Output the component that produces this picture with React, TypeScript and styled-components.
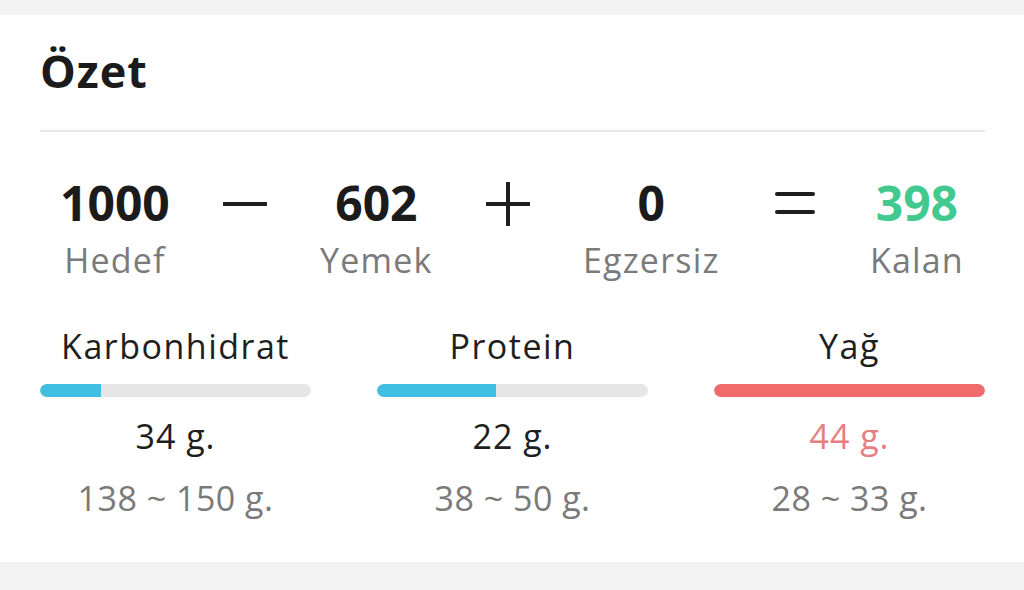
import styled, { createGlobalStyle } from 'styled-components';

const GlobalStyle = createGlobalStyle`
  html, body {
    margin: 0;
    padding: 0;
    background: #f3f3f3;
    font-family: 'Open Sans', 'DejaVu Sans', sans-serif;
  }
`;

const SUMMARY = {
  goal: 1000,
  food: 602,
  exercise: 0,
  remaining: 398,
};

const MACROS = [
  { name: 'Karbonhidrat', amount: 34, min: 138, max: 150, over: false },
  { name: 'Protein', amount: 22, min: 38, max: 50, over: false },
  { name: 'Yağ', amount: 44, min: 28, max: 33, over: true },
];

type OpKind = 'minus' | 'plus' | 'equals';

const OpIcon = ({ kind }: { kind: OpKind }) => (
  <Operator viewBox="0 0 44 44" width={44} height={44}>
    {kind === 'minus' && <line x1="1" y1="22" x2="43" y2="22" />}
    {kind === 'plus' && (
      <>
        <line x1="1" y1="22" x2="43" y2="22" />
        <line x1="22" y1="1" x2="22" y2="43" />
      </>
    )}
    {kind === 'equals' && (
      <>
        <line x1="4" y1="12" x2="40" y2="12" />
        <line x1="4" y1="30" x2="40" y2="30" />
      </>
    )}
  </Operator>
);

const App = () => {
  return (
    <Page>
      <GlobalStyle />
      <Card>
        <Title>Özet</Title>
        <Divider />
        <Equation>
          <Term>
            <Value>{SUMMARY.goal}</Value>
            <TermLabel>Hedef</TermLabel>
          </Term>
          <OpIcon kind="minus" />
          <Term>
            <Value>{SUMMARY.food}</Value>
            <TermLabel>Yemek</TermLabel>
          </Term>
          <OpIcon kind="plus" />
          <Term>
            <Value>{SUMMARY.exercise}</Value>
            <TermLabel>Egzersiz</TermLabel>
          </Term>
          <OpIcon kind="equals" />
          <Term>
            <Value $accent>{SUMMARY.remaining}</Value>
            <TermLabel>Kalan</TermLabel>
          </Term>
        </Equation>
        <MacroGrid>
          {MACROS.map(m => {
            const pct = Math.min(100, (m.amount / m.max) * 100);
            return (
              <Macro key={m.name}>
                <MacroName>{m.name}</MacroName>
                <Track>
                  <Fill $over={m.over} style={{ width: m.over ? '100%' : `${pct}%` }} />
                </Track>
                <Amount $over={m.over}>{m.amount} g.</Amount>
                <Range>
                  {m.min} ~ {m.max} g.
                </Range>
              </Macro>
            );
          })}
        </MacroGrid>
      </Card>
    </Page>
  );
};

export default App;

const Page = styled.div`
  width: 1024px;
  height: 590px;
  padding-top: 15px;
  box-sizing: border-box;
  background: #f3f3f3;
`;

const Card = styled.div`
  background: #ffffff;
  padding: 33px 39px 46px 40px;
  height: 547px;
  box-sizing: border-box;
`;

const Title = styled.h1`
  margin: 0;
  font-size: 45px;
  line-height: 45px;
  font-weight: 700;
  letter-spacing: 1px;
  color: #1b1b1b;
`;

const Divider = styled.div`
  height: 2px;
  background: #e9e9e9;
  margin-top: 37px;
`;

const Equation = styled.div`
  display: flex;
  justify-content: space-between;
  align-items: flex-start;
  padding: 47px 21px 0 20px;
`;

const Term = styled.div`
  display: flex;
  flex-direction: column;
  align-items: center;
`;

const Value = styled.div<{ $accent?: boolean }>`
  font-size: 48px;
  line-height: 48px;
  font-weight: 700;
  color: ${p => (p.$accent ? '#42c98f' : '#1b1b1b')};
`;

const TermLabel = styled.div`
  margin-top: 16px;
  font-size: 34px;
  line-height: 34px;
  letter-spacing: 1.2px;
  color: #7a7a7a;
`;

const Operator = styled.svg`
  margin-top: 3px;
  flex: none;
  stroke: #1e1e1e;
  stroke-width: 4;
  stroke-linecap: round;
`;

const MacroGrid = styled.div`
  display: grid;
  grid-template-columns: repeat(3, 1fr);
  column-gap: 66px;
  margin-top: 52px;
`;

const Macro = styled.div`
  display: flex;
  flex-direction: column;
  align-items: center;
`;

const MacroName = styled.div`
  font-size: 34px;
  line-height: 34px;
  letter-spacing: 1.5px;
  color: #1e1e1e;
`;

const Track = styled.div`
  width: 100%;
  height: 13px;
  margin-top: 21px;
  border-radius: 7px;
  background: #e6e6e6;
  overflow: hidden;
`;

const Fill = styled.div<{ $over: boolean }>`
  height: 100%;
  border-radius: ${p => (p.$over ? '7px' : '7px 0 0 7px')};
  background: ${p => (p.$over ? '#f06b6b' : '#41bfe0')};
`;

const Amount = styled.div<{ $over: boolean }>`
  margin-top: 22px;
  font-size: 34px;
  line-height: 34px;
  letter-spacing: 1px;
  color: ${p => (p.$over ? '#e67f7f' : '#1e1e1e')};
`;

const Range = styled.div`
  margin-top: 28px;
  font-size: 34px;
  line-height: 34px;
  letter-spacing: 0.5px;
  color: #7a7a7a;
`;
